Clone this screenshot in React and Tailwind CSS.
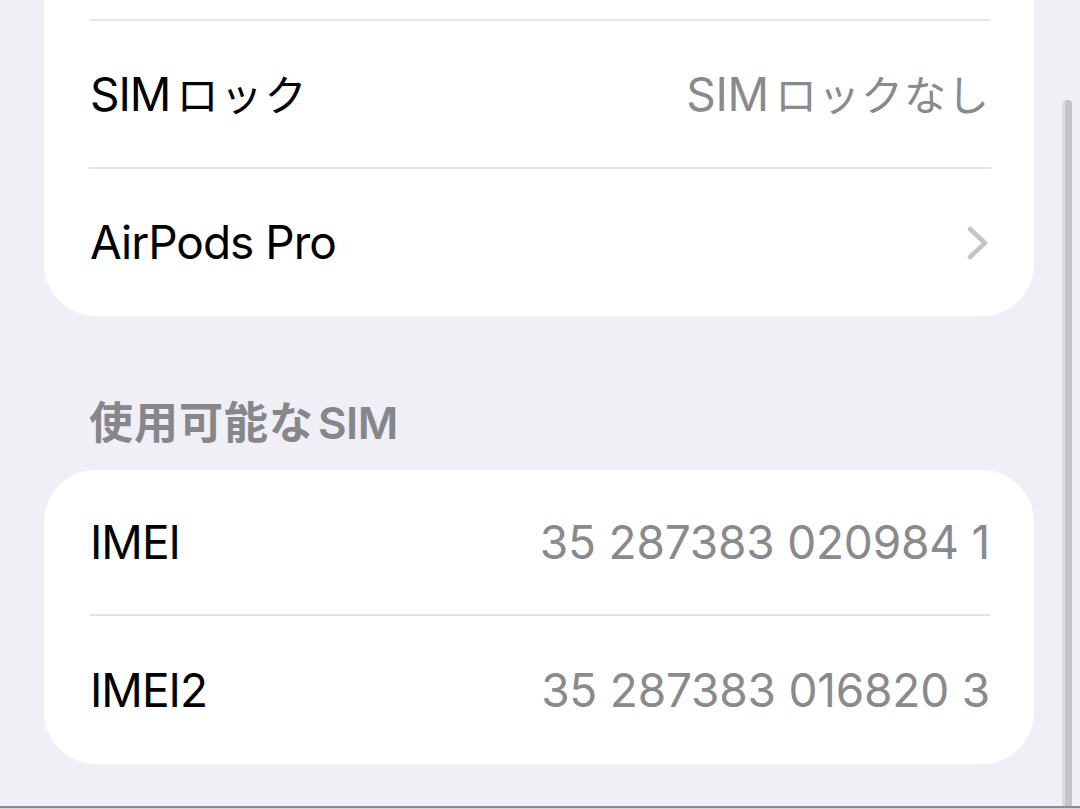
import React from "react";

const font = { fontFamily: '"Inter", "Noto Sans CJK JP", sans-serif' };

function Sep() {
  return <div className="h-[2px] bg-[#e4e4e7] ml-[45px] mr-[43px]" />;
}

function Row({ label, value, chevron, h }) {
  return (
    <div className={`flex items-center justify-between pl-[46px] pr-[44px] ${h}`}>
      <div className="text-[46px] text-black tracking-[-1px]">{label}</div>
      {value && (
        <div className="text-[46px] text-[#8a8a8e] tracking-[-0.2px]">{value}</div>
      )}
      {chevron && (
        <svg width="24" height="34" viewBox="0 0 24 34">
          <polyline
            points="4,3 19,17 4,31"
            fill="none"
            stroke="#c4c4c8"
            strokeWidth="4.5"
            strokeLinecap="round"
            strokeLinejoin="round"
          />
        </svg>
      )}
    </div>
  );
}

export default function App() {
  return (
    <div
      className="relative w-[1080px] h-[809px] overflow-hidden bg-[#f0eff5]"
      style={font}
    >
      <div className="mx-[44px] bg-white rounded-b-[52px] w-[990px]">
        <div className="h-[19px]" />
        <Sep />
        <Row
          label={<>SIM<span className="text-[42px] ml-[6px] tracking-[2px]">ロック</span></>}
          value={<>SIM<span className="text-[42px] ml-[6px] tracking-[1px]">ロックなし</span></>}
          h="h-[146px]"
        />
        <Sep />
        <Row label="AirPods Pro" chevron h="h-[147px]" />
      </div>

      <div className="h-[154px] flex items-center pl-[89px] pt-[60px] text-[#86868b] font-semibold">
        <span className="text-[44px] tracking-[1px]">使用可能な</span>
        <span className="text-[44px] ml-[4px] tracking-[-0.5px]">SIM</span>
      </div>

      <div className="mx-[44px] bg-white rounded-[52px] w-[990px]">
        <Row label="IMEI" value="35 287383 020984 1" h="h-[144px]" />
        <Sep />
        <Row label="IMEI2" value="35 287383 016820 3" h="h-[148px]" />
      </div>

      <div className="absolute left-[1062px] top-[100px] bottom-0 w-[10px] rounded-t-[4px] bg-[#c4c4c8] border-l-[3px] border-[#dcdce0]" />
      <div className="absolute left-0 right-0 bottom-0 h-[3px] border-t-2 border-[#8a8a8c] bg-[#d8d8da]" />
    </div>
  );
}
